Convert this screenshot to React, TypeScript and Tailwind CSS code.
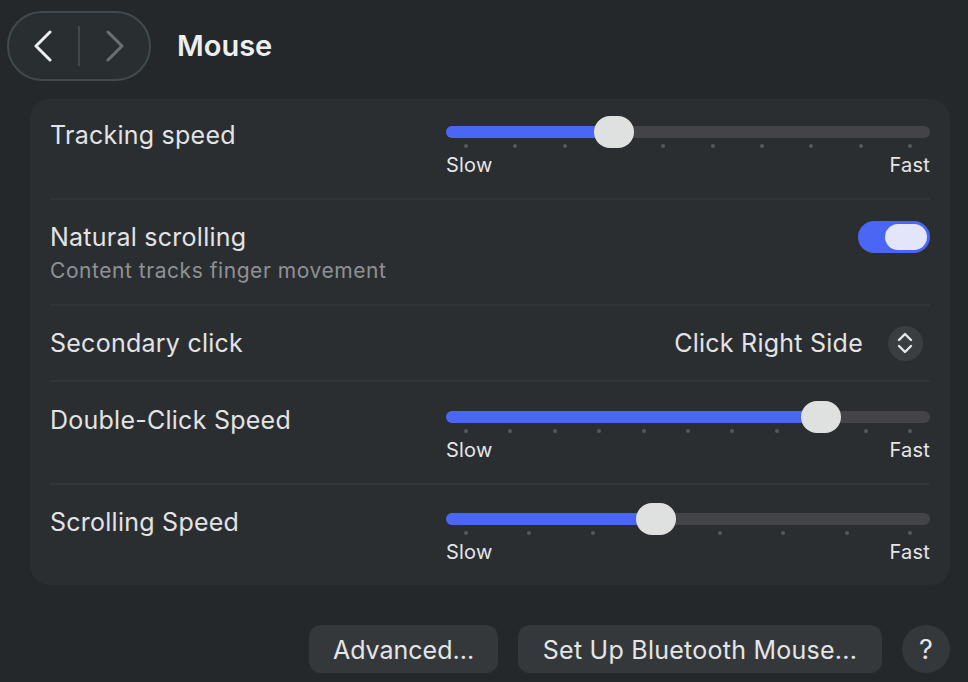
const font = "font-['Inter','Liberation_Sans',sans-serif]";

type SliderProps = {
  fill: string;
  thumb: string;
  ticks: number;
};

const Slider = ({ fill, thumb, ticks }: SliderProps) => {
  return (
    <div className="w-[484px] shrink-0">
      <div className="relative h-3 rounded-full bg-[#434447]">
        <div className={`h-3 rounded-l-full bg-[#4966f5] ${fill}`} />
        {/* Thumb */}
        <div className={`absolute -top-2.5 h-8 w-10 rounded-[16px] bg-[#dfe1e0] ${thumb}`} />
      </div>
      <div className="mt-[6px] flex justify-between px-[18px]">
        {Array.from({ length: ticks }).map((_, i) => (
          <span key={i} className="h-[4px] w-[4px] rounded-full bg-[#56595c]" />
        ))}
      </div>
      <div className="mt-[5px] flex justify-between text-[20px] leading-6 tracking-[0.2px] text-[#e4e5e6]">
        <span>Slow</span>
        <span>Fast</span>
      </div>
    </div>
  );
};

const App = () => {
  const label = "text-[25px] tracking-[0.25px] text-[#e2e3e4]";
  const button = "h-12 rounded-xl bg-[#35383b] pt-[3px] text-[25px] text-[#e4e5e6]";

  return (
    <div className={`h-[682px] w-[968px] overflow-hidden bg-[#25282b] ${font}`}>
      {/* Header */}
      <div className="flex h-[99px] items-start pl-[7px] pt-[11px]">
        <div className="flex h-[70px] w-[144px] items-center rounded-full border-2 border-[#414a4f] bg-[#292e31]">
          <div className="flex w-[70px] justify-center pr-[2px]">
            <svg width="18" height="32" viewBox="0 0 18 32" fill="none" stroke="#eeeeee" strokeWidth="3" strokeLinecap="round" strokeLinejoin="round">
              <path d="M16 2 L2 16 L16 30" />
            </svg>
          </div>
          <div className="-ml-px h-10 w-[2px] bg-[#43484b]" />
          <div className="flex flex-1 justify-center">
            <svg width="18" height="32" viewBox="0 0 18 32" fill="none" stroke="#6c6f71" strokeWidth="3" strokeLinecap="round" strokeLinejoin="round">
              <path d="M2 2 L16 16 L2 30" />
            </svg>
          </div>
        </div>
        <h1 className="ml-[26px] mt-[17px] text-[29px] font-semibold leading-9 text-[#eeeeee]">Mouse</h1>
      </div>

      {/* Settings panel */}
      <div className="ml-[30px] h-[486px] w-[920px] rounded-[20px] bg-[#2b2e31] px-5">
        <div className="flex h-[101px] justify-between border-b-2 border-[#323538] pt-[27px]">
          <span className={`-mt-[5px] leading-[28px] ${label}`}>Tracking speed</span>
          <Slider fill="w-[150px]" thumb="left-[148px]" ticks={10} />
        </div>

        <div className="flex h-[106px] justify-between border-b-2 border-[#323538] pt-[21px]">
          <div>
            <div className={`leading-[32px] ${label}`}>Natural scrolling</div>
            <div className="mt-[5px] text-[21px] leading-[26px] tracking-[0.55px] text-[#8f9295]">Content tracks finger movement</div>
          </div>
          <div className="flex h-8 w-[72px] items-center justify-end rounded-full bg-[#4966f5] pr-[3px]">
            <div className="h-[26px] w-[42px] rounded-full bg-[#e3e6fb]" />
          </div>
        </div>

        <div className="flex h-[76px] items-center justify-between border-b-2 border-[#323538]">
          <span className={`leading-[32px] ${label}`}>Secondary click</span>
          <div className="flex items-center pr-[7px]">
            <span className={`leading-[32px] ${label}`}>Click Right Side</span>
            <div className="ml-[25px] flex h-[35px] w-[35px] items-center justify-center rounded-full bg-[#3b3e41]">
              <svg className="-ml-[2px]" width="16" height="24" viewBox="0 0 16 24" fill="none" stroke="#e6e7e8" strokeWidth="2.4" strokeLinecap="round" strokeLinejoin="round">
                <path d="M2 9 L8 3 L14 9" />
                <path d="M2 15 L8 21 L14 15" />
              </svg>
            </div>
          </div>
        </div>

        <div className="flex h-[103px] justify-between border-b-2 border-[#323538] pt-[29px]">
          <span className={`-mt-[5px] leading-[28px] ${label}`}>Double-Click Speed</span>
          <Slider fill="w-[357px]" thumb="left-[355px]" ticks={11} />
        </div>

        <div className="flex h-[100px] justify-between pt-[28px]">
          <span className={`-mt-[5px] leading-[28px] ${label}`}>Scrolling Speed</span>
          <Slider fill="w-[192px]" thumb="left-[190px]" ticks={8} />
        </div>
      </div>

      {/* Footer buttons */}
      <div className="mr-[18px] mt-10 flex justify-end gap-5">
        <button className={`w-[189px] ${button}`}>Advanced...</button>
        <button className={`w-[364px] tracking-[0.25px] ${button}`}>Set Up Bluetooth Mouse...</button>
        <button className="h-12 w-12 rounded-full bg-[#35383b] pt-[2px] text-[27px] text-[#e4e5e6]">?</button>
      </div>
    </div>
  );
};

export default App;
